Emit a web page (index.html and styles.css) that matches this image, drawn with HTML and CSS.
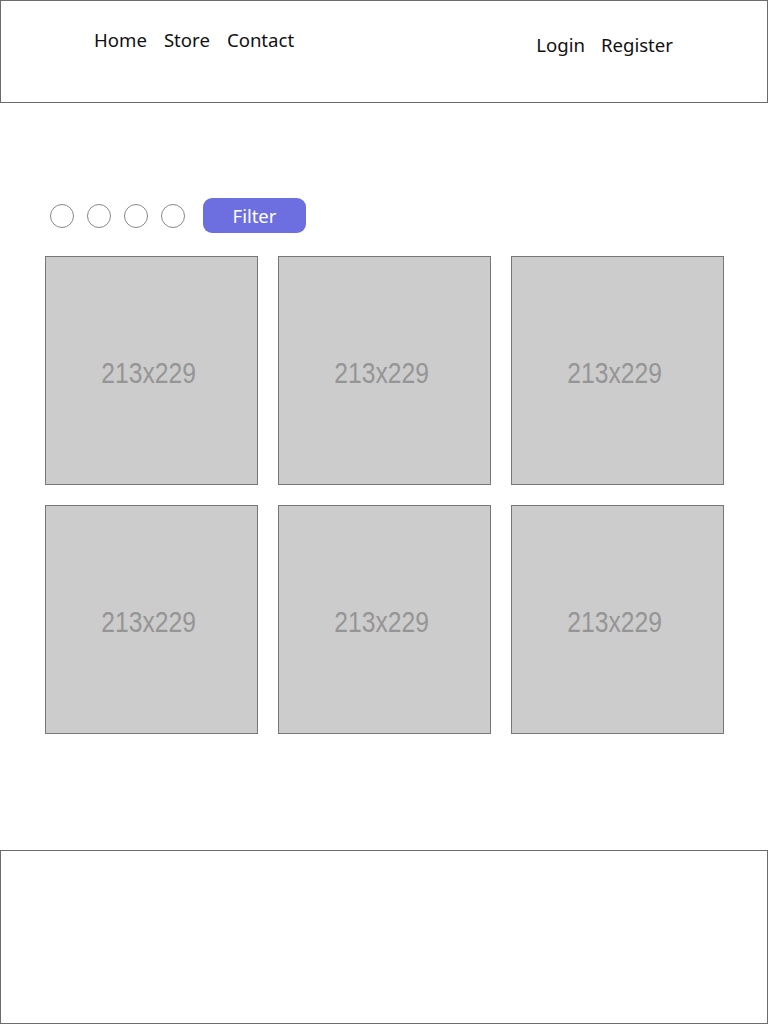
FILE: index.html
```html
<!DOCTYPE html>
<html>
<head>
<meta charset="utf-8">
<link rel="stylesheet" href="styles.css">
</head>
<body>
<header class="top">
  <nav class="nav-left">
    <a>Home</a><a>Store</a><a>Contact</a>
  </nav>
  <nav class="nav-right">
    <a>Login</a><a>Register</a>
  </nav>
</header>
<main class="content">
  <div class="filters">
    <span class="dot"></span><span class="dot"></span><span class="dot"></span><span class="dot"></span>
    <button class="filter-btn">Filter</button>
  </div>
  <div class="grid">
    <div class="card"><span>213x229</span></div>
    <div class="card"><span>213x229</span></div>
    <div class="card"><span>213x229</span></div>
    <div class="card"><span>213x229</span></div>
    <div class="card"><span>213x229</span></div>
    <div class="card"><span>213x229</span></div>
  </div>
</main>
<footer class="bottom"></footer>
</body>
</html>
```

FILE: styles.css
```css
* { box-sizing: border-box; }
body {
  margin: 0;
  background: #fff;
  font-family: "Noto Sans", "Open Sans", sans-serif;
  color: #111;
}
.top {
  height: 103px;
  border: 1px solid #6b6b6b;
  display: flex;
  justify-content: space-between;
  padding: 0 94px 0 93px;
}
.nav-left, .nav-right {
  display: flex;
  font-size: 18.6px;
}
.nav-left { padding-top: 27px; gap: 17px; }
.nav-right { padding-top: 32px; gap: 16px; }
.nav-left a, .nav-right a { line-height: 24px; height: 24px; }
.content {
  padding: 95px 44px 0 45px;
  height: 747px;
}
.filters {
  display: flex;
  align-items: center;
  gap: 13px;
  height: 35px;
  padding-left: 5px;
}
.dot {
  width: 24px;
  height: 24px;
  border: 1px solid #888;
  border-radius: 50%;
}
.filter-btn {
  margin-left: 5px;
  width: 103px;
  height: 35px;
  border: none;
  border-radius: 9px;
  background: #6d6fe0;
  color: #fff;
  font-family: "Noto Sans", "Open Sans", sans-serif;
  font-size: 18.5px;
  padding: 0;
}
.grid {
  margin-top: 23px;
  display: grid;
  grid-template-columns: repeat(3, 213px);
  grid-auto-rows: 229px;
  gap: 20px;
}
.card {
  background: #cccccc;
  border: 1px solid #777;
  display: flex;
  align-items: center;
  justify-content: center;
}
.card span {
  font-family: "Liberation Sans", Arial, sans-serif;
  font-size: 29px;
  color: #959595;
  transform: scaleX(0.85);
  margin-left: -6px;
  margin-top: 5px;
}
.bottom {
  height: 174px;
  border: 1px solid #6b6b6b;
}
```
